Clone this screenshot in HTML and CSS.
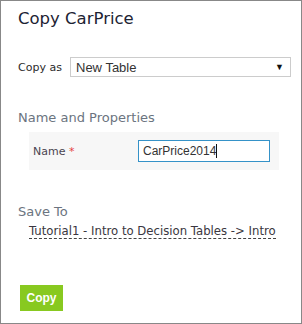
FILE: index.html
```html
<!DOCTYPE html>
<html lang="en">
<head>
  <meta charset="UTF-8" />
  <title>Copy CarPrice</title>
  <link rel="stylesheet" href="styles.css">
</head>
<body>
  <div class="dialog">
    <h1 class="title">Copy CarPrice</h1>

    <!-- Copy as -->
    <div class="copy-as">
      <label>Copy as</label>
      <div class="select">
        <span>New Table</span>
        <span class="arrow">&#9660;</span>
      </div>
    </div>

    <!-- Name and Properties -->
    <h2 class="section">Name and Properties</h2>
    <div class="props">
      <label>Name <span class="req">*</span></label>
      <div class="input">CarPrice2014<span class="caret"></span></div>
    </div>

    <!-- Save To -->
    <h2 class="section save">Save To</h2>
    <div class="path"><a href="#">Tutorial1 - Intro to Decision Tables -&gt; Intro</a></div>

    <button class="copy-btn">Copy</button>
  </div>
</body>
</html>
```

FILE: styles.css
```css
* {
  margin: 0;
  padding: 0;
  box-sizing: border-box;
}
html, body {
  width: 302px;
  height: 324px;
  overflow: hidden;
  background: #fff;
}
body {
  font-family: "DejaVu Sans", Verdana, sans-serif;
  color: #333;
}

.dialog {
  width: 302px;
  height: 324px;
  border: 1px solid #888;
  padding: 0 0 0 17px;
}

/* Title */
.title {
  font-size: 16.5px;
  font-weight: normal;
  color: #1d2333;
  padding: 8px 0 0 0;
  height: 56px;
}

/* Copy as row */
.copy-as {
  display: flex;
  align-items: center;
  height: 20px;
}
.copy-as label {
  font-size: 11px;
  color: #2b2b2b;
  width: 52px;
}
.select {
  width: 221px;
  height: 20px;
  border: 1px solid #ccc;
  display: flex;
  align-items: center;
  justify-content: space-between;
  padding: 0 6px 0 5px;
  font-family: "Liberation Sans", Arial, sans-serif;
  font-size: 13px;
  color: #333;
}
.select .arrow {
  font-size: 9px;
  color: #111;
}

/* Sections */
.section {
  font-size: 13px;
  font-weight: normal;
  color: #6b7480;
  margin-top: 33px;
  height: 22px;
}
.section.save {
  margin-top: 34px;
  height: 20px;
}

.props {
  margin-left: 11px;
  width: 250px;
  height: 38px;
  background: #f7f7f7;
  display: flex;
  align-items: center;
  padding-left: 4px;
}
.props label {
  font-size: 11px;
  color: #4a4450;
  width: 105px;
}
.props .req {
  color: #e5403f;
}
.input {
  width: 132px;
  height: 22px;
  border: 1px solid #3592c8;
  background: #fff;
  font-family: "Liberation Sans", Arial, sans-serif;
  font-size: 12px;
  color: #333;
  padding: 3px 0 0 4px;
}
.caret {
  display: inline-block;
  width: 1px;
  height: 14px;
  background: #111;
  vertical-align: -3px;
}

/* Save To path */
.path {
  padding-left: 11px;
  font-size: 11.7px;
}
.path a {
  color: #3a3640;
  text-decoration: none;
  border-bottom: 1px dashed #444;
}

/* Button */
.copy-btn {
  margin: 47px 0 0 2px;
  width: 43px;
  height: 26px;
  border: none;
  background: #88c920;
  color: #fff;
  font-family: "Liberation Sans", Arial, sans-serif;
  font-weight: bold;
  font-size: 12px;
}
```
